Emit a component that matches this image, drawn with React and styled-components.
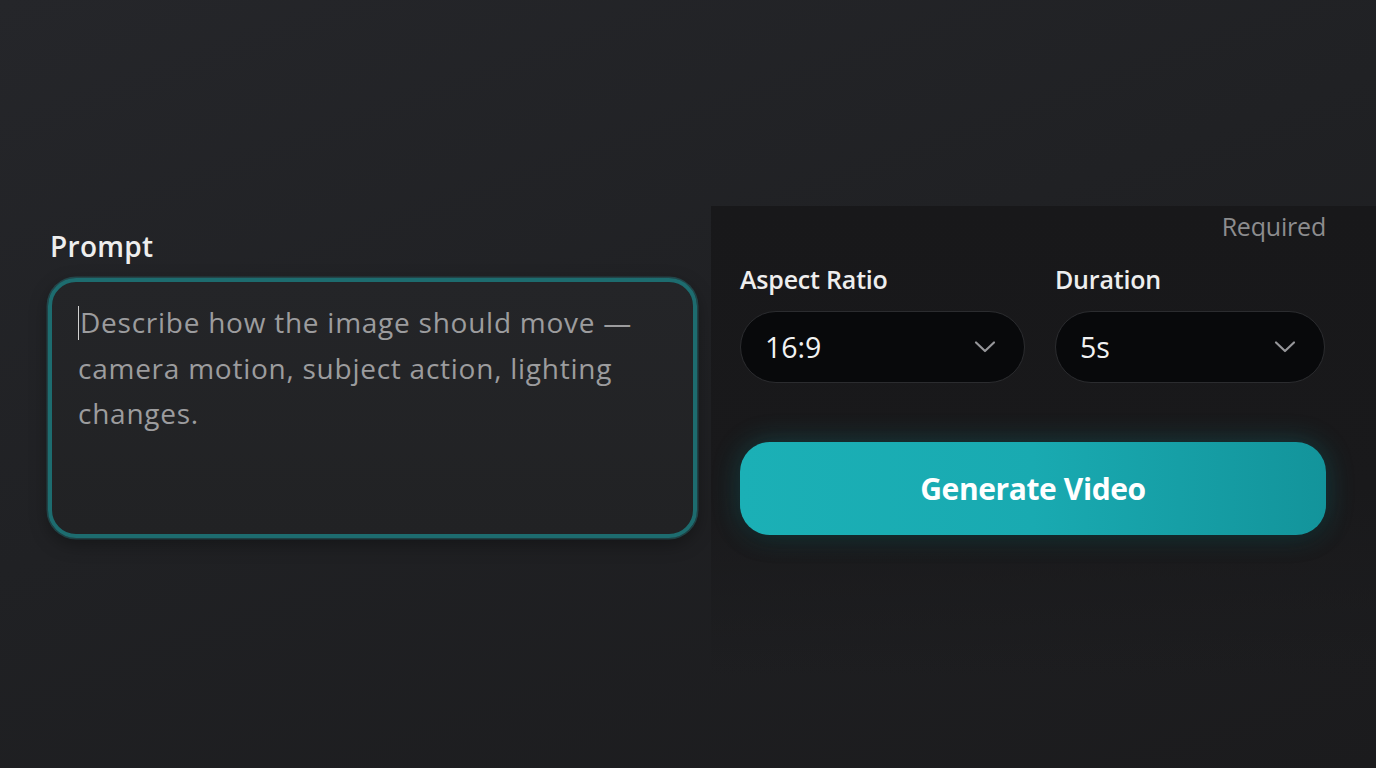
import React from "react";
import styled, { createGlobalStyle } from "styled-components";

const Global = createGlobalStyle`
  html, body {
    margin: 0;
    padding: 0;
    height: 100%;
  }
  body {
    background: linear-gradient(160deg, #25262a 0%, #202124 45%, #1b1b1d 100%);
    font-family: "Open Sans", "Noto Sans", sans-serif;
    color: #ececec;
    overflow: hidden;
  }
`;

const Page = styled.div`
  width: 1376px;
  height: 768px;
  box-sizing: border-box;
  padding-top: 206px;
  display: flex;
  align-items: flex-start;
`;

const LeftColumn = styled.div`
  width: 649px;
  margin-left: 48px;
  padding-top: 22px;
  display: flex;
  flex-direction: column;
`;

const Label = styled.div`
  font-size: ${(p) => p.$size || 25}px;
  font-weight: 600;
  letter-spacing: ${(p) => (p.$size ? 0.3 : -0.2)}px;
  line-height: 36px;
  color: #eeeeee;
  padding-left: ${(p) => p.$indent || 0}px;
`;

const PromptBox = styled.div`
  margin-top: 14px;
  height: 260px;
  box-sizing: border-box;
  border: 4px solid #1d6c6f;
  border-radius: 28px;
  background: linear-gradient(180deg, #242528 0%, #212224 100%);
  box-shadow: 0 0 0 1.5px rgba(45, 140, 145, 0.35), 0 6px 18px rgba(0, 0, 0, 0.35);
  padding: 18px 26px;
`;

const Caret = styled.span`
  display: inline-block;
  width: 1px;
  height: 34px;
  background: #d0d0d0;
  vertical-align: -7px;
  margin-right: 1px;
`;

const PlaceholderText = styled.div`
  font-size: 28px;
  line-height: 45.5px;
  letter-spacing: 0.75px;
  color: #9c9c9e;
`;

const Panel = styled.div`
  flex: 1;
  margin-left: 14px;
  min-height: 470px;
  padding: 1px 50px 0 29px;
  background: linear-gradient(180deg, #18181a 0%, #19191b 60%, rgba(26, 26, 28, 0) 100%);
  display: flex;
  flex-direction: column;
`;

const Required = styled.div`
  align-self: flex-end;
  font-size: 25px;
  line-height: 38px;
  color: #8c8c8e;
  letter-spacing: -0.2px;
`;

const SelectGrid = styled.div`
  margin-top: 16px;
  display: grid;
  grid-template-columns: 285px 270px;
  column-gap: 30px;
`;

const Field = styled.div`
  display: flex;
  flex-direction: column;
  gap: 14px;
`;

const Select = styled.div`
  height: 72px;
  box-sizing: border-box;
  border-radius: 36px;
  background: #08090b;
  border: 1.5px solid #2b2c2f;
  display: flex;
  align-items: center;
  justify-content: space-between;
  padding: 0 28px 0 24px;
  font-size: 28.5px;
  color: #f2f2f2;
  letter-spacing: 0px;
`;

const Chevron = () => (
  <svg width="22" height="14" viewBox="0 0 22 14" fill="none">
    <path d="M2 2.5 L11 11 L20 2.5" stroke="#96969a" strokeWidth="2.2" strokeLinecap="round" strokeLinejoin="round" />
  </svg>
);

const GenerateButton = styled.button`
  margin-top: 59px;
  height: 93px;
  border: none;
  border-radius: 30px;
  background: linear-gradient(90deg, #1bb0b6 0%, #19aab1 50%, #13949b 100%);
  box-shadow: 0 0 28px rgba(27, 176, 182, 0.28), 0 6px 20px rgba(0, 0, 0, 0.35);
  color: #ffffff;
  font-family: "Open Sans", "Noto Sans", sans-serif;
  font-size: 30px;
  font-weight: 700;
  letter-spacing: -0.4px;
  cursor: pointer;
`;

export default function App() {
  return (
    <>
      <Global />
      <Page>
        <LeftColumn>
          <Label $size={28} $indent={2}>Prompt</Label>
          <PromptBox>
            <PlaceholderText>
              <Caret />
              Describe how the image should move —
              <br />
              camera motion, subject action, lighting
              <br />
              changes.
            </PlaceholderText>
          </PromptBox>
        </LeftColumn>
        <Panel>
          <Required>Required</Required>
          <SelectGrid>
            <Field>
              <Label>Aspect Ratio</Label>
              <Select>
                <span>16:9</span>
                <Chevron />
              </Select>
            </Field>
            <Field>
              <Label>Duration</Label>
              <Select>
                <span>5s</span>
                <Chevron />
              </Select>
            </Field>
          </SelectGrid>
          <GenerateButton>Generate Video</GenerateButton>
        </Panel>
      </Page>
    </>
  );
}
